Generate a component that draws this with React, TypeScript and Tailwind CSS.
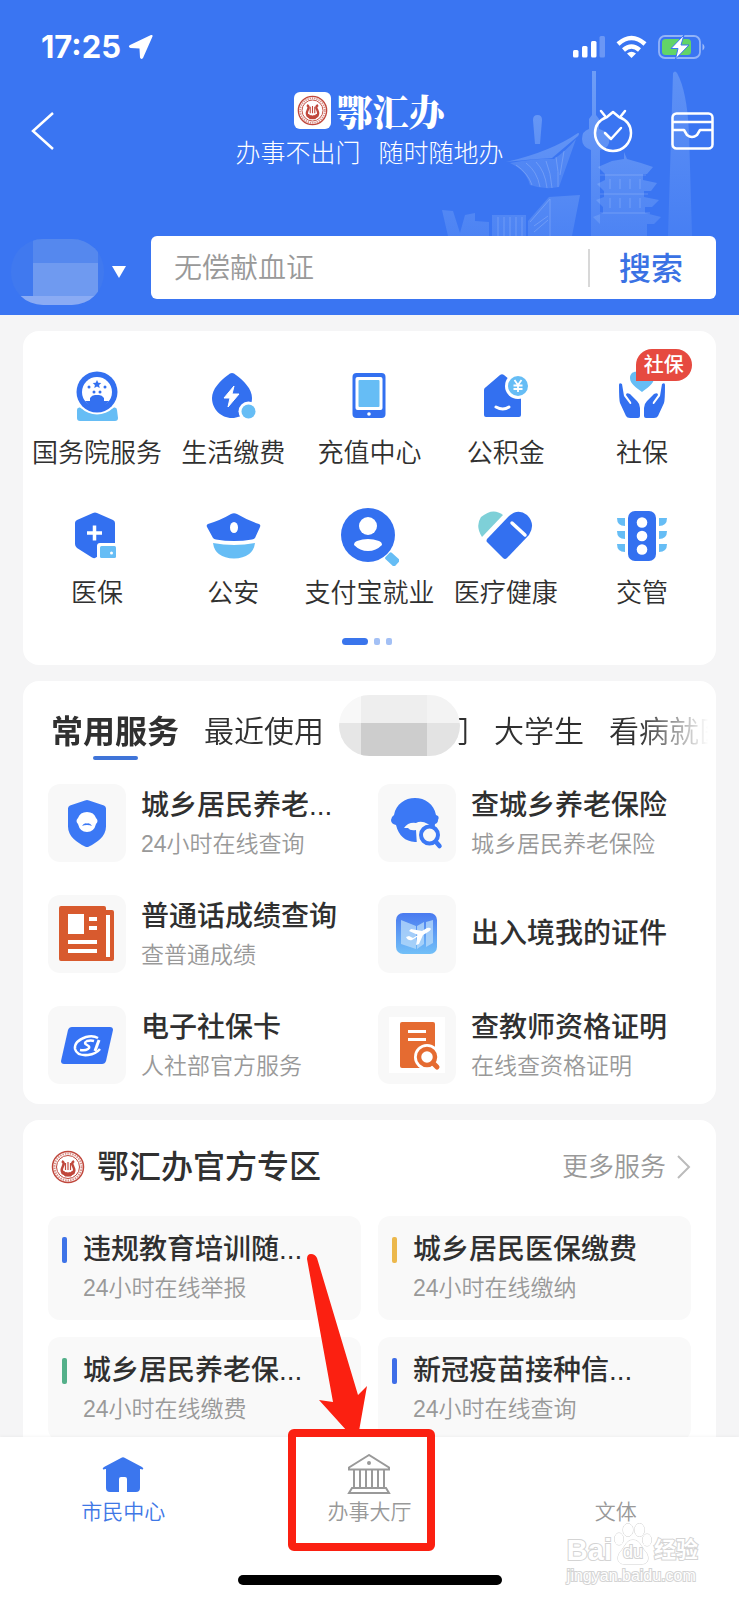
import type { ReactNode } from 'react';

const BLUE = '#3370f0';
const SKY = '#66bdf5';

const services: { name: string; badge?: string; icon: ReactNode }[] = [
  {
    name: '国务院服务',
    icon: (
      <>
        <path d="M10 44q0-3 3-2.500Q30 53 47 41.500q3-.5 3 2.500l1 8q0 3-3 3H13q-3 0-3-3Z" fill={SKY} />
        <circle cx="30" cy="26" r="22.500" fill="#fff" />
        <circle cx="30" cy="26" r="20.500" fill={BLUE} />
        <circle cx="30" cy="26" r="15" fill="#fff" />
        <path d="m30 14 1.300 2.800 3 .3-2.200 2 .6 3-2.700-1.500-2.700 1.500.6-3-2.200-2 3-.3Z" fill={BLUE} />
        <circle cx="22" cy="21" r="1.500" fill={BLUE} />
        <circle cx="38" cy="21" r="1.500" fill={BLUE} />
        <circle cx="27" cy="26" r="1.500" fill={BLUE} />
        <circle cx="33" cy="26" r="1.500" fill={BLUE} />
        <path d="M23 32q2-3 5-3h4q3 0 5 3v3h5l-6 7H24l-6-7h5Z" fill={BLUE} />
      </>
    ),
  },
  {
    name: '生活缴费',
    icon: (
      <>
        <path d="M29 7q2 0 4 2c8 6 16 14 16 23 0 11-9 20-20 20S9 43 9 32c0-9 8-17 16-23q2-2 4-2Z" fill={BLUE} />
        <path d="m31 20-10 12h6l-2 9 11-13h-7Z" fill="#fff" stroke="#fff" strokeLinejoin="round" />
        <circle cx="45.500" cy="45.500" r="10" fill="#fff" />
        <circle cx="45.500" cy="45.500" r="7" fill={SKY} />
      </>
    ),
  },
  {
    name: '充值中心',
    icon: (
      <>
        <rect x="13.500" y="7" width="33" height="45" rx="4" fill={BLUE} />
        <rect x="16.500" y="11" width="27" height="33" rx="2" fill="#fff" />
        <rect x="19.500" y="14" width="21" height="27" rx="1" fill={SKY} />
        <circle cx="30" cy="48" r="1.800" fill="#fff" />
      </>
    ),
  },
  {
    name: '公积金',
    icon: (
      <>
        <path d="M24 9q2-1.500 4 0l17 14v26q0 2-2 2H10q-2 0-2-2V24q0-2 2-3Z" fill={BLUE} />
        <path d="M20 41q7 4 13 0" fill="none" stroke="#fff" strokeWidth="3" strokeLinecap="round" />
        <circle cx="42" cy="20" r="13" fill="#fff" />
        <circle cx="42" cy="20" r="10" fill={SKY} />
        <path d="m38.500 14 3.500 5 3.500-5M37.500 19.500h9M37.500 23h9M42 19v7" fill="none" stroke="#fff" strokeWidth="1.800" />
      </>
    ),
  },
  {
    name: '社保',
    badge: '社保',
    icon: (
      <>
        <path d="M30 26c-5-4-12-8-12-14 0-8 10-8 12-2 2-6 12-6 12 2 0 6-7 10-12 14Z" fill={SKY} />
        <path id="hand" d="M7 19q0-3 3-1l2 12 6 8q2 0 1-2l-5-7q0-3 4-1l7 7q3 3 3 7v8q0 2-2 2h-8q-3 0-4-2L8 37q-1-3-1-18Z" fill={BLUE} />
        <use href="#hand" transform="matrix(-1 0 0 1 60 0)" />
      </>
    ),
  },
  {
    name: '医保',
    icon: (
      <>
        <path d="M26 7q2-1 4 0l16 7q2 1 2 3v24L28 52q-1 .5-3-.5L10 42q-2-1.500-2-4V17q0-2 2-3Z" fill={BLUE} />
        <path d="M20 27h15M27.500 19.500v15" stroke="#fff" strokeWidth="3.500" />
        <path d="M30 40q0-3 3-3h17v16H30Z" fill="#fff" />
        <rect x="33" y="40" width="16" height="12" rx="1.500" fill={SKY} />
        <circle cx="44.500" cy="47" r="1.500" fill="#fff" />
      </>
    ),
  },
  {
    name: '公安',
    icon: (
      <>
        <path d="M28 8q3-1.500 6 0 10 6 22 10 2 1 1 3l-5 11q-1 1-3 1.500-18 3-36 0-2-.5-3-1.500L4 21q-1-2 1-3 13-4 23-10Z" fill={BLUE} />
        <ellipse cx="31" cy="21.500" rx="4" ry="5.500" fill="#fff" />
        <path d="M10 37q21 4 42 0-2 15-21 15.500Q12 52 10 37Z" fill={SKY} />
      </>
    ),
  },
  {
    name: '支付宝就业',
    icon: (
      <>
        <circle cx="29" cy="29" r="27" fill={BLUE} />
        <circle cx="29" cy="20" r="9" fill="#fff" />
        <path d="M15 39q0-3 3-4 11-4 22 0 3 1 3 4-6 6-14 6t-14-6Z" fill="#fff" />
        <rect x="-6" y="-4.500" width="13" height="9" rx="1.500" transform="translate(53 53) rotate(43)" fill={SKY} />
      </>
    ),
  },
  {
    name: '医疗健康',
    icon: (
      <>
        <path d="M6 31Q-1 20 5 11q12-10 22-2Z" fill="#7ed0d8" />
        <path d="m11 33 22-23q9-8 18-1 9 9 2 20L31 52q-2 2-4 0L11 36q-1-1 0-3Z" fill={BLUE} />
        <path d="m36 17 13 12" stroke="#fff" strokeWidth="3.500" strokeLinecap="round" />
      </>
    ),
  },
  {
    name: '交管',
    icon: (
      <>
        <rect x="16" y="5" width="28" height="50" rx="7" fill={BLUE} />
        <circle cx="30" cy="16.500" r="5.300" fill="#fff" />
        <circle cx="30" cy="30" r="5.300" fill="#fff" />
        <circle cx="30" cy="43.500" r="5.300" fill="#fff" />
        <path
          d="M5 12h8v8q-8 0-8-8ZM5 25h8v8q-8 0-8-8ZM5 38h8v8q-8 0-8-8ZM55 12h-8v8q8 0 8-8ZM55 25h-8v8q8 0 8-8ZM55 38h-8v8q8 0 8-8Z"
          fill={SKY}
        />
      </>
    ),
  },
];

const common: { title: string; sub?: string; icon: ReactNode }[] = [
  {
    title: '城乡居民养老...',
    sub: '24小时在线查询',
    icon: (
      <>
        <path d="M37 16.500q2-1 4 0l15 5q2 1 2 3v18c0 10-9 16-17 20q-2 1-4 0c-8-4-17-10-17-20v-18q0-2 2-3Z" fill="#3b78f5" />
        <path d="M30 34q2-6 9-6t9 6q3 3 0 6-2 8-9 8t-9-8q-3-3 0-6Z" fill="#fff" />
        <path d="M34 42q2-3.500 5-2.500 3-1 5 2.500-2-1-5-1t-5 1Z" fill="#3b78f5" />
      </>
    ),
  },
  {
    title: '查城乡养老保险',
    sub: '城乡居民养老保险',
    icon: (
      <>
        <path
          d="M16 31C18 20 27 14 37 14s19 6 21 17q4 1 2 5 0 3-3 4-1 19-20 18-15-1-19-17-5-1-5-5 0-3 3-5Z"
          fill="#3b78f5"
        />
        <path d="M26 44q4-6 12-5 5-3 12 1l6 4v18H39l-1-16q-6 1-8-2Z" fill="#f8f8f8" />
        <circle cx="51.500" cy="51" r="8.500" fill="#f8f8f8" stroke="#3b78f5" strokeWidth="4" />
        <path d="m58 58 3.500 4" stroke="#3b78f5" strokeWidth="4.500" strokeLinecap="round" />
      </>
    ),
  },
  {
    title: '普通话成绩查询',
    sub: '查普通成绩',
    icon: (
      <>
        <path d="M11 13q0-2 2-2h43q2 0 2 2v2h6q2 0 2 2v47q0 2-2 2H13q-2 0-2-2Z" fill="#d85a2e" />
        <path d="M20 19h16v20H20ZM41 22h8v4h-8ZM41 31h8v4h-8ZM20 45h29v4H20ZM20 54h29v4H20ZM58 20h4v42h-4Z" fill="#fff" />
      </>
    ),
  },
  {
    title: '出入境我的证件',
    icon: (
      <>
        <defs>
          <linearGradient id="pass" x1="0" y1="0" x2="0" y2="1">
            <stop offset="0" stopColor="#4a7af0" />
            <stop offset="1" stopColor="#72c0f8" />
          </linearGradient>
        </defs>
        <rect x="18" y="18" width="41" height="41" rx="7" fill="url(#pass)" />
        <path d="m23 25 15 6v23l-15-5ZM39 31l7-4v22l-7 5ZM48 27l7-2v23l-7 4Z" fill="#b4d8fa" opacity=".8" />
        <path d="m28 42 3-1 4 2 5-3-9-4 2-2 11 2 5-3q3-1 4 1-1 2-3 3l-5 3-4 9-3 1 1-8-5 3q-4 1-6-3Z" fill="#fff" />
      </>
    ),
  },
  {
    title: '电子社保卡',
    sub: '人社部官方服务',
    icon: (
      <>
        <path d="M20 24q1-3 4-3h38q3 0 3 3l-7 31q-1 3-4 3H16q-3 0-3-3Z" fill="#3672f4" />
        <path d="M50 32q-5-3-12-1-12 4-11 12 2 7 13 6 8-1 12-6" fill="none" stroke="#fff" strokeWidth="2.500" />
        <path d="M46 35q-3-1-7 0-4 2 0 4t1 4q-3 2-8 1" fill="none" stroke="#fff" strokeWidth="2.500" />
        <path d="m51 34-4 11" stroke="#fff" strokeWidth="3" />
      </>
    ),
  },
  {
    title: '查教师资格证明',
    sub: '在线查资格证明',
    icon: (
      <>
        <rect x="11" y="11" width="56" height="56" fill="#fff" />
        <rect x="22" y="16" width="35" height="46" rx="2" fill="#e56b31" />
        <path d="M30 25.500h18M30 33.500h18" stroke="#fff" strokeWidth="3" />
        <circle cx="49" cy="51" r="13" fill="#fff" />
        <circle cx="49" cy="51" r="8" fill="none" stroke="#e56b31" strokeWidth="4.500" />
        <path d="m55 57 4 4" stroke="#e56b31" strokeWidth="5" strokeLinecap="round" />
      </>
    ),
  },
];

const official = [
  { title: '违规教育培训随...', sub: '24小时在线举报', bar: 'bg-[#3f74e8]' },
  { title: '城乡居民医保缴费', sub: '24小时在线缴纳', bar: 'bg-[#ecb84c]' },
  { title: '城乡居民养老保...', sub: '24小时在线缴费', bar: 'bg-[#54b08a]' },
  { title: '新冠疫苗接种信...', sub: '24小时在线查询', bar: 'bg-[#3f6ee8]' },
];

function Emblem({ className }: { className: string }) {
  return (
    <svg viewBox="0 0 34 34" className={className} fill="none" stroke="#c0473c" aria-hidden="true">
      <circle cx="17" cy="17" r="15.500" strokeWidth="1.500" />
      <circle cx="17" cy="17" r="13.500" strokeWidth="2" strokeDasharray="1.500 1" opacity=".6" />
      <circle cx="17" cy="17" r="11.500" strokeWidth="1" />
      <path d="M11 11q3 2 1 5-3 6 1 8 4 2 8 0 4-2 1-8-2-3 1-5" strokeWidth="2.500" />
      <path d="M14.500 13v7M17 12v8M19.500 13v7" strokeWidth="1.200" />
      <path d="M12 21q5 4 10 0l-2 5h-6Z" fill="#c0473c" />
    </svg>
  );
}

function StatusBar() {
  return (
    <div className="flex h-[92px] items-center justify-between pt-[2px] pr-[34px] pl-[41px]">
      <div className="flex items-center gap-[7px]">
        <span className="font-[Inter] text-[31px] leading-9 font-bold">17:25</span>
        <svg width="26" height="26" viewBox="0 0 26 26" aria-hidden="true">
          <path d="M23 1q2-.5 1.500 1.500L15 24q-2 2-3-.5l-.5-9-9-.5q-3-1-.5-3Z" fill="#fff" />
        </svg>
      </div>
      <div className="flex items-center gap-[11px]">
        <svg width="32" height="22" viewBox="0 0 32 22" fill="#fff" aria-hidden="true">
          <rect x="0" y="14" width="5.500" height="7.500" rx="1.500" />
          <rect x="9" y="10" width="5.500" height="11.500" rx="1.500" />
          <rect x="18" y="5" width="5.500" height="16.500" rx="1.500" />
          <rect x="26.500" y="0" width="5.500" height="21.500" rx="1.500" opacity=".25" />
        </svg>
        <svg width="31" height="24" viewBox="0 0 31 24" fill="none" stroke="#fff" strokeWidth="4.500" aria-hidden="true">
          <path d="M2 9q13.500-12 27 0M7.500 15q8-7 16 0" />
          <path d="m15.500 23-4.500-4.500q4.500-3.500 9 0Z" fill="#fff" stroke="none" />
        </svg>
        <svg width="47" height="24" viewBox="0 0 47 24" aria-hidden="true">
          <rect x="1" y="1" width="41" height="22" rx="6" fill="none" stroke="#fff" strokeWidth="1.800" opacity=".45" />
          <rect x="4" y="4" width="29" height="16" rx="3.500" fill="#62d467" />
          <path d="M44.500 8.500q2 1.500 2 3.500t-2 3.500Z" fill="#fff" opacity=".5" />
          <path d="M26 0 13 13.500h7L17.500 24 31 10h-8Z" fill="#fff" stroke="#3a75f2" strokeWidth="1" />
        </svg>
      </div>
    </div>
  );
}

function Skyline() {
  return (
    <svg
      width="270"
      height="166"
      viewBox="0 0 270 166"
      className="absolute top-[70px] right-[29px]"
      aria-hidden="true"
    >
      <defs>
        <linearGradient id="fade" x1="0" y1="0" x2="0" y2="166" gradientUnits="userSpaceOnUse">
          <stop offset="0" stopColor="#d5ecff" stopOpacity=".34" />
          <stop offset="1" stopColor="#d5ecff" stopOpacity=".12" />
        </linearGradient>
      </defs>
      <g fill="url(#fade)">
        <path d="M93 50q0-5 4.500-5t4.500 5l-2 24h-5Z" />
        <path d="M66 92Q110 82 138 63q2 0 0 3l-26 22Q90 89 66 92Z" />
        <path d="M70 93q30-5 44-4 12-8 22-20l-17 48q-15 3-29-2Q86 100 70 93Z" opacity=".7" />
        <path d="M152 1h4v44l3 4v10q12 3 10 14-2 6-9 7v86h-9V80q-9-3-9-11t7-10V49l3-4Z" />
        <path d="M233 3q2-3 4 0 10 18 12 60l3 103h-24Z" opacity=".7" />
        <path d="m2 140 11 1 7 22 5-18 10-2v8l14 1v14H8ZM52 145h34v21H52ZM88 151l21-24 31-2-8 41H88Z" />
        <path d="M184 82l3 7 14 4 12 4-6 7h-4v6l14 3-6 8h-7v6l15 3-7 7h-7v6l16 4-7 7h-7v14h-47v-14l-7-7 10-4v-6l-7-7 8-3v-6l-7-7 8-4v-6l-7-7 14-6 12-2Z" />
      </g>
      <g stroke="#fff" fill="none" opacity=".18">
        <path d="M76 95q12 8 16 20M86 93q11 8 14 24M96 92q9 9 11 26M106 91q5 12 6 27M116 87q3 14 2 30M124 81l-4 24" />
        <path d="M58 147v19M64 147v19M70 147v19M76 147v19M82 147v19M90 152l20-23v37M94 156l14-10M94 162l14-12" />
        <path d="M160 105h46M160 124h48M160 143h50M170 109v10M180 109v10M190 109v10M200 109v10M170 128v10M180 128v10M190 128v10M200 128v10" />
      </g>
    </svg>
  );
}

function Header() {
  return (
    <header className="relative shrink-0 bg-[#3a75f2] pb-[10px] text-white">
      <Skyline />
      <StatusBar />
      <div className="relative grid grid-cols-[1fr_auto_1fr] items-center px-[25px]">
        <button type="button" aria-label="返回" className="justify-self-start pl-[6px]">
          <svg width="24" height="38" viewBox="0 0 24 38" fill="none" stroke="#fff" strokeWidth="2.500">
            <path d="M22 1 2 19l20 18" />
          </svg>
        </button>
        <div className="flex flex-col items-center gap-2">
          <div className="flex items-center gap-[5px]">
            <span className="rounded-md bg-white p-[3px]">
              <Emblem className="size-[31px]" />
            </span>
            <h1 className="font-['Noto_Serif_CJK_SC','Noto_Sans_CJK_SC',serif] text-4xl leading-8 font-black">鄂汇办</h1>
          </div>
          <p className="flex gap-[18px] text-[25px] leading-8 font-light">
            <span>办事不出门</span>
            <span>随时随地办</span>
          </p>
        </div>
        <div className="flex items-center gap-[38px] justify-self-end">
          <button type="button" aria-label="待办">
            <svg width="40" height="44" viewBox="0 0 40 44" fill="none" stroke="#fff" strokeWidth="2.500" strokeLinecap="round" strokeLinejoin="round">
              <path d="m20 3-6 5C6 11 2 17 2 24c0 10 8 18 18 18s18-8 18-18c0-7-4-13-12-16ZM8 2l4 5M32 2l-4 5M12 24l6 6 10-11" />
            </svg>
          </button>
          <button type="button" aria-label="卡包">
            <svg width="43" height="38" viewBox="0 0 43 38" fill="none" stroke="#fff" strokeWidth="2.500" strokeLinejoin="round">
              <rect x="1.500" y="1.500" width="40" height="35" rx="4" />
              <path d="M2 10h39M2 18h11l3 5q5 4 10 0l3-5h12" />
            </svg>
          </button>
        </div>
      </div>
      <div className="relative mt-[67px] flex h-[69px] items-center pr-[23px] pl-[11px]">
        <button type="button" aria-label="切换地区" className="flex items-center gap-2 self-end">
          <span className="grid h-[66px] w-[93px] grid-cols-[22px_1fr_6px] grid-rows-[24px_33px_9px] overflow-hidden rounded-[32px] bg-[#4079ef]">
            <span className="col-start-2 bg-[#5588ee]" />
            <span className="col-start-2 row-start-2 bg-[#6f9af0]" />
            <span className="col-span-2 row-start-3 bg-[#8aabf4]" />
          </span>
          <svg width="14" height="12" viewBox="0 0 14 12" fill="#fff">
            <path d="M0 0h14L7 12Z" />
          </svg>
        </button>
        <form className="ml-[25px] flex h-[63px] flex-1 items-center self-start rounded-md bg-white">
          <input
            type="text"
            aria-label="搜索服务"
            placeholder="无偿献血证"
            className="min-w-0 flex-1 pt-[2px] pl-[23px] text-[28px] leading-10 font-[350] text-[#333] outline-none placeholder:text-[#999]"
          />
          <button type="button" className="w-[128px] border-l-2 border-[#d8d8d8] pt-[2px] pr-1 text-[32px] leading-9 font-medium text-[#3a72e4]">
            搜索
          </button>
        </form>
      </div>
    </header>
  );
}

function ServiceGrid() {
  return (
    <section className="rounded-2xl bg-white px-[6px] pt-[35px] pb-5">
      <div className="grid grid-cols-5 gap-y-[39px]">
        {services.map((s) => (
          <a key={s.name} href="#" className="relative flex flex-col items-center gap-[13px]">
            <svg width="60" height="60" viewBox="0 0 60 60" aria-hidden="true">
              {s.icon}
            </svg>
            <span className="text-[26px] leading-7 whitespace-nowrap">{s.name}</span>
            {s.badge && (
              <span className="absolute -top-[17px] left-[62px] rounded-full rounded-bl-none bg-[#e64a40] px-2 text-xl leading-8 font-medium text-white">
                {s.badge}
              </span>
            )}
          </a>
        ))}
      </div>
      <div className="mt-[31px] flex justify-center gap-[6px] pr-[5px]">
        <span className="h-[7px] w-[26px] rounded-sm bg-[#3a75ec]" />
        <span className="h-[7px] w-[6px] rounded-xs bg-[#a3c0f5]" />
        <span className="h-[7px] w-[6px] rounded-xs bg-[#a3c0f5]" />
      </div>
    </section>
  );
}

function CommonServices() {
  return (
    <section className="rounded-2xl bg-white pb-5">
      <div className="mr-2 flex items-start gap-[25px] overflow-hidden [mask-image:linear-gradient(to_right,#000_90%,transparent)] pt-[31px] pl-7 text-3xl leading-10 whitespace-nowrap">
        <button type="button" className="flex flex-col items-center gap-1 text-[32px] leading-10 font-bold">
          常用服务
          <span className="h-1 w-[45px] rounded-full bg-[#3f74d8]" />
        </button>
        <button type="button" className="leading-10">最近使用</button>
        <button type="button" className="relative w-[120px] shrink-0 text-right leading-10">
          门
          <span className="absolute -top-[17px] -left-[10px] grid h-[61px] w-[121px] grid-cols-[22px_66px_1fr] grid-rows-[28px_1fr] overflow-hidden rounded-[32px]">
            <span className="bg-[#f8f8f8]" />
            <span className="bg-[#eeeeee]" />
            <span className="bg-[#f3f3f3]" />
            <span className="bg-[#e6e6e6]" />
            <span className="bg-[#cdcdcd]" />
            <span className="bg-[#e3e3e3]" />
          </span>
        </button>
        <button type="button" className="leading-10">大学生</button>
        <button type="button" className="leading-10">看病就医</button>
      </div>
      <div className="mt-6 grid grid-cols-2 gap-x-[17px] gap-y-[33px] px-[25px]">
        {common.map((c) => (
          <a key={c.title} href="#" className="flex items-center gap-[15px] whitespace-nowrap">
            <span className="shrink-0 rounded-xl bg-[#f8f8f8]">
              <svg width="78" height="78" viewBox="0 0 78 78" aria-hidden="true">
                {c.icon}
              </svg>
            </span>
            <span className="flex flex-col">
              <span className="text-[28px] leading-[42px] font-medium">{c.title}</span>
              {c.sub && <span className="text-[23px] leading-[34px] font-[350] text-[#999]">{c.sub}</span>}
            </span>
          </a>
        ))}
      </div>
    </section>
  );
}

function OfficialZone() {
  return (
    <section className="rounded-2xl bg-white px-[25px] pt-[27px] pb-6">
      <div className="flex items-center">
        <Emblem className="mx-[3px] size-[34px]" />
        <h2 className="ml-[9px] text-[32px] leading-10 font-medium">鄂汇办官方专区</h2>
        <a href="#" className="ml-auto flex items-center gap-[11px] text-[26px] leading-10 font-[350] text-[#999]">
          更多服务
          <svg width="14" height="26" viewBox="0 0 14 26" fill="none" stroke="#bbb" strokeWidth="2" aria-hidden="true">
            <path d="m1 2 11 11L1 24" />
          </svg>
        </a>
      </div>
      <div className="mt-[29px] grid grid-cols-2 gap-[17px]">
        {official.map((o) => (
          <a key={o.title} href="#" className="grid h-[104px] grid-cols-[5px_1fr] content-center items-center gap-x-4 rounded-xl bg-[#f9f9f9] pl-[14px] whitespace-nowrap">
            <span className={`h-[26px] w-[5px] rounded-xs ${o.bar}`} />
            <span className="text-[28px] leading-10 font-medium">{o.title}</span>
            <span className="col-start-2 text-[23px] leading-9 font-[350] text-[#999]">{o.sub}</span>
          </a>
        ))}
      </div>
    </section>
  );
}

function Watermark() {
  return (
    <div className="pointer-events-none absolute right-[41px] bottom-[14px] flex flex-col text-white [paint-order:stroke] [-webkit-text-stroke:2px_#d4d4d4]">
      <div className="flex items-end gap-[2px]">
        <span className="text-[29px] leading-8 font-bold">Bai</span>
        <span className="relative flex h-11 w-[38px] items-end justify-center">
          <svg viewBox="0 0 38 44" className="absolute inset-0" fill="#fff" stroke="#d0d0d0" aria-hidden="true">
            <ellipse cx="14" cy="8" rx="5" ry="6.500" />
            <ellipse cx="25.500" cy="8" rx="5" ry="6.500" />
            <ellipse cx="5" cy="17" rx="4.500" ry="6" />
            <ellipse cx="33" cy="18" rx="4.500" ry="6" />
            <path d="M19 18c7 0 8 7 12 11s5 13-3 13H10c-8 0-7-9-3-13s5-11 12-11Z" />
          </svg>
          <span className="relative text-lg leading-7">du</span>
        </span>
        <span className="text-[22px] leading-8 font-bold">经验</span>
      </div>
      <span className="text-base leading-5">jingyan.baidu.com</span>
    </div>
  );
}

function BottomNav() {
  return (
    <nav className="relative shrink-0 bg-white pb-[15px] shadow-[0_-1px_3px_rgba(0,0,0,0.04)]">
      <div className="grid grid-cols-3 pt-[17px] text-[21px] leading-7 font-[350] text-[#999]">
        <a href="#" className="flex flex-col items-center gap-1 text-[#3f78e6]">
          <svg width="44" height="40" viewBox="0 0 44 40" fill="#3b76ee" aria-hidden="true">
            <path d="M20 4q2-1.500 4 0l17 9q2 1 1 2.500l-3-.5v19q0 4-4 4h-9V25q0-2-2-2h-4q-2 0-2 2v13h-9q-4 0-4-4V15l-3 .5Q1 14 3 13Z" />
          </svg>
          市民中心
        </a>
        <a href="#" className="relative flex flex-col items-center gap-1">
          <svg width="44" height="40" viewBox="0 0 44 40" fill="none" stroke="#999" strokeWidth="2" aria-hidden="true">
            <path d="M22 1 2 13.500v2h40v-2ZM7 16v18M13 16v18M19 16v18M25 16v18M31 16v18M37 16v18M5 34h34l3 5H2Z" />
            <circle cx="22" cy="9" r="1" />
          </svg>
          办事大厅
          <span className="absolute -top-[25px] left-1/2 h-[122px] w-[147px] -translate-x-[81px] rounded-md border-8 border-[#fb2011]" />
          <svg
            width="64"
            height="184"
            viewBox="0 0 64 184"
            className="absolute -top-[201px] left-1/2 -translate-x-[64px]"
            fill="#fb2011"
            aria-hidden="true"
          >
            <path d="M2 6q0-5 4-5 4 0 6 4l41 137 9-9-8 45q-5 5-12 0L14 147l14 2Z" />
          </svg>
        </a>
        <a href="#" className="flex flex-col items-center justify-end">文体</a>
      </div>
      <div className="mx-auto mt-[49px] h-[10px] w-[264px] rounded-full bg-black" />
      <Watermark />
    </nav>
  );
}

export default function App() {
  return (
    <div className="flex h-screen flex-col bg-[#f5f5f6] font-['Liberation_Sans','Noto_Sans_CJK_SC',sans-serif] font-[350] text-[#303030]">
      <Header />
      <main className="flex min-h-0 flex-1 flex-col gap-4 overflow-y-auto px-[23px] pt-4 [scrollbar-width:none] *:shrink-0">
        <ServiceGrid />
        <CommonServices />
        <OfficialZone />
      </main>
      <BottomNav />
    </div>
  );
}
